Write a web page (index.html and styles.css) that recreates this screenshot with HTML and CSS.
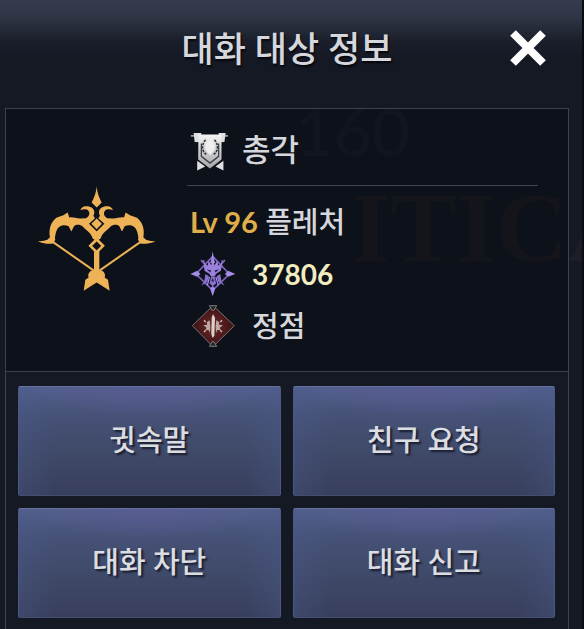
FILE: index.html
```html
<!DOCTYPE html>
<html lang="ko">
<head>
<meta charset="utf-8">
<meta name="viewport" content="width=device-width, initial-scale=1">
<title>대화 대상 정보</title>
<link rel="stylesheet" href="styles.css">
</head>
<body>
<main class="dialog">
  <header class="dialog-header">
    <h1 class="title">대화 대상 정보</h1>
    <button class="close" type="button" aria-label="닫기">
      <svg viewBox="0 0 36 36" aria-hidden="true"><path d="M3 3 33 33M33 3 3 33"/></svg>
    </button>
  </header>

  <div class="frame">
    <section class="profile">
      <svg class="bow" viewBox="50 50 357 320" aria-hidden="true">
        <defs>
          <g id="limb">
            <path d="M52 215C64 216 73 214 81 211L89 203C84 180 92 157 108 145L129 137 142 129 147 144C158 142 167 147 179 147L197 146C209 140 211 126 199 120 192 118 187 119 180 122 183 114 189 110 196 110 210 109 222 116 222 128 222 134 220 137 219 139L224 146 206 163 230 187V215L217 207C212 190 199 184 188 172 178 164 168 165 161 170L153 186 145 170C127 162 112 170 107 188 104 200 103 207 105 211L98 222C84 224 70 222 52 215Z"/>
            <path d="M94 215 226 307" fill="none" stroke="#edb356" stroke-width="6"/>
            <path d="M230 304H212C202 313 203 320 205 324L195 331 190 364 230 338Z"/>
          </g>
        </defs>
        <use href="#limb"/>
        <use href="#limb" transform="translate(458 0) scale(-1 1)"/>
        <path d="M229 50C231 74 238 86 244 99L229 114 214 99C220 86 227 74 229 50ZM229 147 245 163 229 179 213 163ZM221 245H237V310H221Z"/>
        <path d="M229 210 248 229 229 248 210 229Z" fill="#0d1119" stroke="#edb356" stroke-width="8"/>
      </svg>

      <div class="details">
        <div class="row guild">
          <svg class="icon" viewBox="0 0 150 150" aria-hidden="true">
            <defs><linearGradient id="silver" x2="0" y2="1"><stop stop-color="#f4f4f4"/><stop offset="1" stop-color="#a4a6aa"/></linearGradient></defs>
            <path d="M15 31H131V37H15Z" fill="#999"/>
            <path d="M24 25H48L46 54 27 53ZM102 25H124L120 53 104 54ZM35 112V142L60 130ZM117 112V142L92 130Z" fill="#dedfe1"/>
            <path d="M39 30H111V108L75 136 38 108Z" fill="url(#silver)"/>
            <path d="M48 58V98L75 119 102 98V58" fill="none" stroke="#3d4045" stroke-width="4"/>
            <path d="M61 46C47 64 49 83 66 94M89 46C103 64 101 83 84 94" fill="none" stroke="#33373d" stroke-width="5" stroke-dasharray="8 3"/>
            <path d="M75 43C94 59 94 78 75 94 56 78 56 59 75 43Z" fill="#efefef"/>
          </svg>
          <span>총각</span>
        </div>
        <div class="row"><span><span class="level">Lv 96</span> 플레처</span></div>
        <div class="row rating">
          <svg class="icon" viewBox="10 14 146 146" aria-hidden="true">
            <g fill="none" stroke="#8067c6" stroke-width="5">
              <path d="M82 31 135 87 82 139 29 87Z"/>
              <path d="M45 43 61 61M121 43 105 61M53 43 58 68H107L113 43"/>
            </g>
            <path d="M82 15 86 39 90 52H74L78 39ZM82 158 74 134 82 124 90 134ZM11 87 33 77 43 87 33 96ZM154 87 131 77 121 87 131 96Z" fill="#a68be9"/>
            <path d="M54 51 66 61 69 44 77 59 82 40 88 59 97 44 100 61 112 51 108 77 93 86 89 93H76L71 86 56 77Z" fill="#9a81dc"/>
            <path d="M59 87 70 94 65 112 45 124 55 111ZM106 87 95 94 100 112 120 124 110 111ZM77 94H88L93 117 82 126 72 117Z" fill="#8a70d1"/>
            <path d="M63 72 77 76 74 82ZM102 72 88 76 91 82ZM82 99 86 111H78Z" fill="#201a43"/>
            <path d="M72 96 65 123M92 96 100 123" stroke="#ab92ec" stroke-width="4"/>
          </svg>
          <span class="power">37806</span>
        </div>
        <div class="row">
          <svg class="icon" viewBox="13 5 138 138" aria-hidden="true">
            <defs><radialGradient id="ruby"><stop stop-color="#6d2924"/><stop offset="1" stop-color="#3c1116"/></radialGradient></defs>
            <path d="M82 13 146 73 82 136 20 73Z" fill="url(#ruby)" stroke="#777174" stroke-width="3"/>
            <path d="M71 13H93L85 27H79ZM71 135H93L85 121H79Z" fill="#29292c" stroke="#a0a0a0" stroke-width="2"/>
            <path d="M82 38 88 49 86 104 80 109 77 98 78 49Z" fill="#dad0ce"/>
            <path d="M72 57 63 63 65 70 53 72 63 79 59 87 69 86 73 95 74 75ZM92 57 101 63 99 70 112 72 102 79 105 87 95 86 91 95 90 75Z" fill="#bdaaa7"/>
            <path d="M55 57 60 62M109 57 104 62M55 92 60 87M109 92 104 87" stroke="#cfc0bd" stroke-width="4"/>
          </svg>
          <span>정점</span>
        </div>
      </div>
    </section>

    <div class="actions">
      <button type="button">귓속말</button>
      <button type="button">친구 요청</button>
      <button type="button">대화 차단</button>
      <button type="button">대화 신고</button>
    </div>
  </div>

  <div class="backdrop" aria-hidden="true">
    <span class="gain">획득</span>
    <span class="damage">160</span>
    <span class="critical">ITICA</span>
  </div>
</main>
</body>
</html>
```
FILE: styles.css
```css
* {
  box-sizing: border-box;
}

body {
  margin: 0;
  background: #151924;
  color: #d6d7dc;
  font: 500 29px/36px Lato, "Noto Sans CJK KR", sans-serif;
}

.dialog {
  position: relative;
  display: flex;
  flex-direction: column;
  min-height: 100vh;
  overflow: hidden;
  border-right: 2px solid #0a0c12;
  background: linear-gradient(#363c4d 0, #303646 16px, #1a1e2a 42px, #151924 60px);
}

.dialog-header {
  display: grid;
  grid-template-columns: 1fr auto 1fr;
  align-items: center;
  height: 108px;
  padding: 0 36px 12px 28px;
}

.title {
  grid-column: 2;
  margin: 0;
  font-size: 35px;
  font-weight: 500;
  text-shadow: 1px 2px 2px #05070b;
}

.close {
  justify-self: end;
  width: 36px;
  height: 36px;
  padding: 0;
  border: 0;
  background: none;
}

.close svg {
  display: block;
  fill: none;
  stroke: #fff;
  stroke-width: 8;
}

.frame {
  flex: 1;
  margin: 0 13px 0 5px;
  border: 1px solid #3e424d;
  border-bottom: 0;
}

.profile {
  display: grid;
  grid-template-columns: 181px 1fr;
  padding: 16px 30px 17px 0;
  border-bottom: 1px solid #3e424d;
  background: #0d1119;
}

.bow {
  place-self: center;
  width: 119px;
  height: 107px;
  fill: #edb356;
}

.row {
  display: flex;
  align-items: center;
  gap: 16px;
  height: 56px;
  padding-left: 3px;
}

.rating {
  height: 48px;
}

.guild {
  height: 61px;
  margin-bottom: 8px;
  padding-bottom: 12px;
  gap: 8px;
  border-bottom: 1px solid #41454d;
  font-size: 31px;
}

.icon {
  flex: none;
  width: 46px;
  height: 46px;
}

.guild .icon {
  width: 48px;
  height: 48px;
  margin-left: -4px;
}

.level {
  color: #dfae4b;
  font-weight: 700;
}

.power {
  color: #f1edc0;
  font-size: 28px;
  font-weight: 700;
}

.actions {
  display: grid;
  grid-template-columns: 1fr 1fr;
  gap: 12px;
  padding: 14px 13px 11px 12px;
}

.actions button {
  height: 110px;
  padding: 0 0 2px;
  border: 1px solid #4c5881;
  border-top-color: #66709c;
  border-bottom-color: #444f70;
  border-radius: 2px;
  background:
    radial-gradient(ellipse at 50% 0, #5c5a9699 0, #5c5a9600 60%) top / 100% 40px no-repeat,
    linear-gradient(90deg, #4b5b904d, #4b5b9000 14%, #4b5b9000 86%, #4b5b904d),
    linear-gradient(#53608e, #465277 24%, #3f4968 60%, #383f5c);
  color: #dcdde2;
  font: inherit;
  text-shadow: 2px 2px 2px #171c2c;
}

/* Faint combat text showing through the translucent dialog */
.backdrop {
  position: absolute;
  inset: 0;
  overflow: hidden;
  pointer-events: none;
  color: #ffffff05;
  white-space: nowrap;
}

.backdrop span {
  position: absolute;
}

.gain {
  top: 28px;
  right: 100px;
}

.damage {
  top: 98px;
  right: 172px;
  font-size: 66px;
  line-height: 66px;
}

.critical {
  top: 178px;
  right: -58px;
  color: #ff905008;
  font: 700 100px/100px "Liberation Serif", serif;
}
```
